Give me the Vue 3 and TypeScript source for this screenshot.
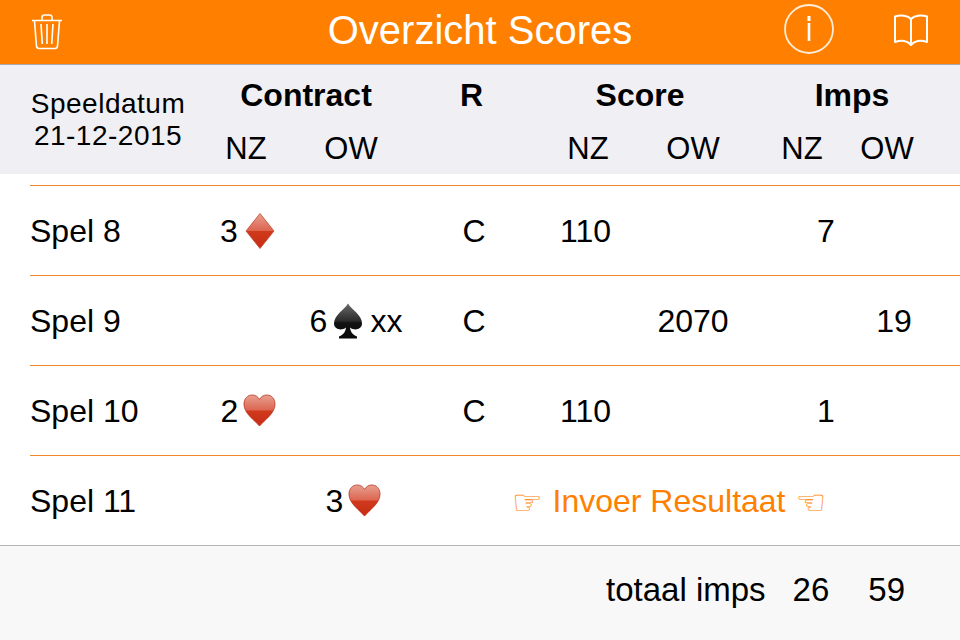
<script setup lang="ts">
interface Row {
  name: string
  level: string
  suit: 'diamond' | 'spade' | 'heart'
  side: 'nz' | 'ow'
  extra?: string
  result?: string
  scoreNz?: string
  scoreOw?: string
  impNz?: string
  impOw?: string
}

const rows: Row[] = [
  { name: 'Spel 8', level: '3', suit: 'diamond', side: 'nz', result: 'C', scoreNz: '110', impNz: '7' },
  { name: 'Spel 9', level: '6', suit: 'spade', side: 'ow', extra: 'xx', result: 'C', scoreOw: '2070', impOw: '19' },
  { name: 'Spel 10', level: '2', suit: 'heart', side: 'nz', result: 'C', scoreNz: '110', impNz: '1' },
  { name: 'Spel 11', level: '3', suit: 'heart', side: 'ow' },
]
</script>

<template>
  <div class="screen">
    <svg width="0" height="0" class="defs">
      <defs>
        <linearGradient id="red" x1="0" y1="0" x2="0" y2="1">
          <stop offset="0" stop-color="#e8a091" />
          <stop offset="0.49" stop-color="#dc6550" />
          <stop offset="0.51" stop-color="#d03a1c" />
          <stop offset="1" stop-color="#c62c14" />
        </linearGradient>
        <linearGradient id="black" x1="0" y1="0" x2="0" y2="1">
          <stop offset="0" stop-color="#6a6a6a" />
          <stop offset="0.5" stop-color="#2a2a2a" />
          <stop offset="0.55" stop-color="#111" />
          <stop offset="1" stop-color="#0a0a0a" />
        </linearGradient>
      </defs>
    </svg>

    <header class="nav">
      <svg class="trash" width="32" height="38" viewBox="0 0 32 38" fill="none" stroke="#fff" stroke-width="1.6">
        <path d="M1 7.5h30M11 7V4.500C11 3 12 2 13.500 2h5C20 2 21 3 21 4.500V7" />
        <path d="M3.500 8l2 25c.1 1.500 1 2.500 2.500 2.500h16c1.500 0 2.400-1 2.500-2.500l2-25" />
        <path d="M10 11l1.300 20M16 11v20M22 11l-1.300 20" />
      </svg>
      <h1 class="title">Overzicht Scores</h1>
      <svg class="info" width="52" height="52" viewBox="0 0 52 52" fill="none" stroke="#fff">
        <circle cx="26" cy="26" r="24" stroke-width="1.800" stroke-opacity=".85" />
        <path d="M26 20v18" stroke-width="2.600" />
        <path d="M26 13v5" stroke-width="3" />
      </svg>
      <svg class="book" width="36" height="34" viewBox="0 0 36 34" fill="none" stroke="#fff" stroke-width="2" stroke-linejoin="round">
        <path d="M18 6C15 2.500 8 1.500 2 3.500V29c6-2 12-1.500 16 3 4-4.500 10-5 16-3V3.500C28 1.500 21 2.500 18 6z" />
        <path d="M18 6v26" />
      </svg>
    </header>

    <section class="head">
      <div class="date">
        <div>Speeldatum</div>
        <div>21-12-2015</div>
      </div>
      <div class="group g-contract">Contract</div>
      <div class="group g-r">R</div>
      <div class="group g-score">Score</div>
      <div class="group g-imps">Imps</div>
      <div class="sub s1">NZ</div>
      <div class="sub s2">OW</div>
      <div class="sub s3">NZ</div>
      <div class="sub s4">OW</div>
      <div class="sub s5">NZ</div>
      <div class="sub s6">OW</div>
    </section>

    <main class="list">
      <div v-for="row in rows" :key="row.name" class="row">
        <div class="name">{{ row.name }}</div>
        <div class="contract" :class="row.side">
          <span class="txt">{{ row.level }}</span>
          <svg v-if="row.suit === 'diamond'" class="suit diamond" width="30" height="36" viewBox="0 0 30 36">
            <path d="M15 .5L29 18 15 35.500 1 18z" fill="url(#red)" stroke="#c4452f" stroke-width=".8" />
          </svg>
          <svg v-else-if="row.suit === 'heart'" class="suit heart" width="33" height="33" viewBox="0 0 34 34">
            <path d="M17 33C12 27 1 20 1 10.500 1 4.500 5 1 9.500 1 13 1 15.500 3 17 5.500 18.500 3 21 1 24.500 1 29 1 33 4.500 33 10.500 33 20 22 27 17 33z" fill="url(#red)" stroke="#b9301a" stroke-width=".8" />
          </svg>
          <svg v-else class="suit spade" width="30" height="36" viewBox="0 0 30 36">
            <path d="M15 .5C19 7 29 12 29 20.500 29 26 22 28.500 17 24.500 17.500 28.500 19 31.500 24 33.500V35.500H6V33.500C11 31.500 12.500 28.500 13 24.500 8 28.500 1 26 1 20.500 1 12 11 7 15 .5z" fill="url(#black)" />
          </svg>
          <span v-if="row.extra" class="txt extra">{{ row.extra }}</span>
        </div>

        <template v-if="row.result">
          <div class="res">{{ row.result }}</div>
          <div class="score-nz">{{ row.scoreNz }}</div>
          <div class="score-ow">{{ row.scoreOw }}</div>
          <div class="imp-nz">{{ row.impNz }}</div>
          <div class="imp-ow">{{ row.impOw }}</div>
        </template>
        <div v-else class="enter">
          <span class="hand">☞</span>
          <span>Invoer Resultaat</span>
          <span class="hand">☜</span>
        </div>
      </div>
    </main>

    <footer class="totals">
      <span>totaal imps</span>
      <span class="tot-a">26</span>
      <span class="tot-b">59</span>
    </footer>
  </div>
</template>

<style>
html,
body {
  margin: 0;
  background: #fff;
}
</style>

<style scoped>
.screen {
  width: 960px;
  height: 640px;
  overflow: hidden;
  display: flex;
  flex-direction: column;
  font-family: "Liberation Sans", Arial, sans-serif;
  color: #000;
  background: #fff;
}

.defs {
  position: absolute;
}

.nav {
  height: 64px;
  flex: none;
  background: #ff8000;
  border-bottom: 1px solid #a9a9ad;
  display: flex;
  align-items: center;
  position: relative;
}

.trash {
  margin-left: 31px;
  margin-top: -1px;
}

.title {
  margin: -4px 0 0;
  text-align: center;
  color: #fff;
  font-size: 40px;
  font-weight: 400;
  flex: 1;
  padding-right: 63px;
}

.info {
  position: absolute;
  left: 783px;
  top: 3px;
}

.book {
  position: absolute;
  left: 893px;
  top: 13px;
}

.head {
  height: 109px;
  flex: none;
  background: #efeff4;
  display: grid;
  grid-template-columns: 196px 100px 110px 134px 100px 106px 84px 1fr;
  grid-template-rows: 60px 49px;
  font-size: 31px;
  text-align: center;
}

.date {
  grid-row: 1 / 3;
  grid-column: 1;
  font-size: 28px;
  line-height: 32px;
  padding-top: 23px;
  padding-left: 22px;
  margin-right: 2px;
  letter-spacing: .5px;
  box-sizing: border-box;
  white-space: nowrap;
}

.group {
  font-weight: 700;
  font-size: 32px;
  line-height: 60px;
}

.g-contract {
  grid-column: 2 / 4;
  padding-left: 10px;
}

.g-r {
  grid-column: 4;
  padding-right: 3px;
}

.g-score {
  grid-column: 5 / 7;
  padding-right: 6px;
}

.g-imps {
  grid-column: 7 / 9;
  padding-right: 2px;
}

.sub {
  line-height: 47px;
  grid-row: 2;
}

.s1 { grid-column: 2; }
.s2 { grid-column: 3; }
.s3 { grid-column: 5; padding-right: 4px; }
.s4 { grid-column: 6; }
.s5 { grid-column: 7; padding-left: 28px; }
.s6 { grid-column: 8; padding-right: 16px; }

.list {
  margin-top: 11px;
  flex: none;
  border-top: 1px solid #f0882a;
  margin-left: 30px;
}

.row {
  height: 89px;
  border-bottom: 1px solid #f0882a;
  display: grid;
  grid-template-columns: 166px 100px 110px 134px 100px 106px 84px 1fr;
  align-items: center;
  text-align: center;
  font-size: 32px;
}

.row:last-child {
  border-bottom: 0;
}

.name,
.txt,
.res,
.score-nz,
.score-ow,
.imp-nz,
.imp-ow {
  padding-top: 2px;
}

.name {
  text-align: left;
}

.contract {
  display: flex;
  align-items: center;
  justify-content: center;
  gap: 5px;
  grid-row: 1;
}

.contract.nz {
  grid-column: 2;
  padding-left: 5px;
}

.contract.ow {
  grid-column: 3;
  padding-left: 10px;
}

.ow .heart {
  margin-right: 5px;
}

.diamond {
  margin-left: 2px;
  margin-right: 2px;
}

.spade {
  margin-left: 1px;
}

.extra {
  margin-left: 2px;
}

.res {
  grid-column: 4;
  padding-left: 2px;
}

.score-nz {
  grid-column: 5;
  padding-right: 9px;
}

.score-ow {
  grid-column: 6;
}

.imp-nz {
  grid-column: 7;
  padding-left: 71px;
}

.imp-ow {
  grid-column: 8;
  padding-right: 2px;
}

.enter {
  grid-column: 4 / 9;
  grid-row: 1;
  color: #ff8000;
  display: flex;
  align-items: center;
  gap: 10px;
  padding-left: 106px;
  padding-top: 2px;
}

.hand {
  font-family: "DejaVu Sans", sans-serif;
  font-size: 34px;
  line-height: 1;
}

.totals {
  flex: 1;
  background: #f8f8f8;
  border-top: 1px solid #b4b4b4;
  display: flex;
  align-items: center;
  justify-content: flex-end;
  padding-right: 55px;
  padding-bottom: 6px;
  font-size: 33px;
}

.tot-a {
  margin-left: 27px;
}

.tot-b {
  margin-left: 39px;
}
</style>
